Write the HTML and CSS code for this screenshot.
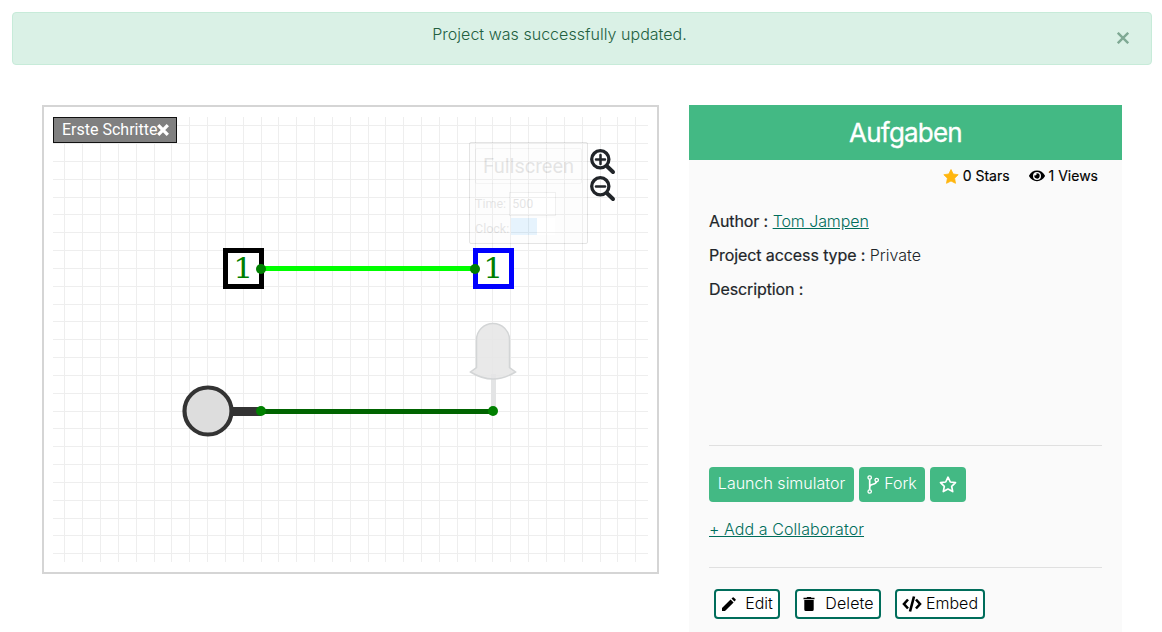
FILE: index.html
```
<!DOCTYPE html>
<html lang="en">
<head>
<meta charset="utf-8">
<title>Aufgaben</title>
<link rel="stylesheet" href="styles.css">
</head>
<body>
<div class="alert">
  <p class="alert-text">Project was successfully updated.</p>
  <button class="alert-close" aria-label="Close"><svg width="12" height="12" viewBox="0 0 12 12"><path d="M.8 .8L11.200 11.200M11.200 .8L.8 11.200" stroke="#7fa994" stroke-width="2.400"/></svg></button>
</div>
<main class="project">
  <section class="preview">
    <svg class="circuit" viewBox="53 117 595 445" width="595" height="445">
      <path class="grid" d="M64.5 117v445M82.5 117v445M100.5 117v445M118.5 117v445M136.5 117v445M154.5 117v445M171.5 117v445M189.5 117v445M207.5 117v445M225.5 117v445M243.5 117v445M261.5 117v445M278.5 117v445M296.5 117v445M314.5 117v445M332.5 117v445M350.5 117v445M368.5 117v445M385.5 117v445M403.5 117v445M421.5 117v445M439.5 117v445M457.5 117v445M475.5 117v445M492.5 117v445M510.5 117v445M528.5 117v445M546.5 117v445M564.5 117v445M582.5 117v445M600.5 117v445M617.5 117v445M635.5 117v445
      M53 125.5h595M53 143.5h595M53 161.5h595M53 179.5h595M53 197.5h595M53 214.5h595M53 232.5h595M53 250.5h595M53 268.5h595M53 286.5h595M53 304.5h595M53 321.5h595M53 339.5h595M53 357.5h595M53 375.5h595M53 393.5h595M53 411.5h595M53 428.5h595M53 446.5h595M53 464.5h595M53 482.5h595M53 500.5h595M53 518.5h595M53 535.5h595M53 553.5h595"/>
      <path class="wire-high" d="M261 268.5H475"/>
      <rect class="pin pin-in" x="225.5" y="250.5" width="36" height="36"/>
      <rect class="pin pin-out" x="475.5" y="250.5" width="36" height="36"/>
      <text class="bit" x="243.3" y="278" textLength="20" lengthAdjust="spacingAndGlyphs">1</text>
      <text class="bit" x="493.3" y="278" textLength="20" lengthAdjust="spacingAndGlyphs">1</text>
      <path class="button-stem" d="M232 411.5H261"/>
      <path class="wire-low" d="M261 411.5H493"/>
      <circle class="button-cap" cx="208" cy="411" r="23.5"/>
      <path class="led-stem" d="M493.5 374V411"/>
      <path class="led-bulb" d="M476.5 367.500V340A16.500 16.500 0 0 1 509.500 340V367.500L515.500 372Q493 386 470.500 372Z"/>
      <g class="node"><circle cx="261" cy="269" r="5"/><circle cx="475" cy="269" r="5"/><circle cx="261" cy="411" r="5"/><circle cx="493" cy="411" r="5"/></g>
    </svg>
    <div class="tab"><span>Erste Schritte</span><svg width="12" height="12" viewBox="0 0 12 12"><path d="M1.200 1.200L10.800 10.800M10.800 1.200L1.200 10.800" stroke="#fff" stroke-width="3.300"/></svg></div>
    <div class="controls">
      <div class="fullscreen">Fullscreen</div>
      <div class="control-row"><span>Time:</span><span class="time-box">500</span></div>
      <div class="control-row clock-row"><span>Clock:</span><span class="clock-box"></span></div>
    </div>
    <div class="zooms">
      <svg width="27" height="27" viewBox="0 0 27 27"><circle cx="11.300" cy="10.300" r="8.600"/><path d="M18 17.300L24 23" stroke-width="4"/><path d="M7 10.500h9M11.500 6v9" stroke-width="2.500"/></svg>
      <svg width="27" height="27" viewBox="0 0 27 27"><circle cx="11.300" cy="10.300" r="8.600"/><path d="M18 17.300L24 23" stroke-width="4"/><path d="M7 10.500h9" stroke-width="2.500"/></svg>
    </div>
  </section>
  <aside class="details">
    <h1 class="title">Aufgaben</h1>
    <div class="stats">
      <span class="stat"><svg width="16" height="15" viewBox="0 0 16 15"><path d="M8 .5L10.200 5L15.200 5.700L11.600 9.200L12.500 14.300L8 12L3.500 14.300L4.400 9.200L.8 5.700L5.800 5Z" fill="#ffb60f" stroke="#ffb60f" stroke-width=".8" stroke-linejoin="round"/></svg>0 Stars</span>
      <span class="stat views"><svg width="16" height="12" viewBox="0 0 576 432"><path d="M572.500 199.400C518.300 93.600 410.900 22 288 22S57.700 93.600 3.500 199.400a32 32 0 0 0 0 29.200C57.700 334.400 165.100 406 288 406s230.300-71.600 284.500-177.400a32 32 0 0 0 0-29.200zM288 358a144 144 0 1 1 144-144 144 144 0 0 1-144 144zm0-240a95 95 0 0 0-25.300 3.800 48 48 0 0 1-66.900 66.900A95.800 95.800 0 1 0 288 118z"/></svg>1 Views</span>
    </div>
    <div class="info">
      <p><b>Author :</b> <a href="#">Tom Jampen</a></p>
      <p><b>Project access type :</b> Private</p>
      <p><b>Description :</b></p>
    </div>
    <div class="actions">
      <button class="primary">Launch simulator</button>
      <button class="primary fork"><svg width="12" height="19" viewBox="0 0 12 19" fill="none" stroke="#fff" stroke-width="1.300"><circle cx="2.700" cy="2.500" r="1.700"/><circle cx="2.700" cy="16.500" r="1.700"/><circle cx="9.700" cy="5" r="1.700"/><path d="M2.700 4.200V14.800M9.300 6.700C9 10.500 3 8 2.700 12" stroke-width="1.700"/></svg>Fork</button>
      <button class="primary star"><svg width="18" height="17" viewBox="0 0 18 17"><path d="M9 1.200L11.300 6L16.500 6.700L12.700 10.300L13.700 15.600L9 13.100L4.300 15.600L5.300 10.300L1.500 6.700L6.700 6Z" fill="none" stroke="#fff" stroke-width="1.700" stroke-linejoin="round"/></svg></button>
    </div>
    <div class="collab"><a href="#">+ Add a Collaborator</a></div>
    <div class="manage">
      <button class="outline edit"><svg width="14" height="14" viewBox="0 0 14 14"><path d="M0 14V11L8.600 2.400L11.600 5.400L3 14ZM9.500 1.600L10.700.4Q11.200 0 11.700.4L13.600 2.300Q14 2.800 13.600 3.300L12.400 4.500Z"/></svg>Edit</button>
      <button class="outline delete"><svg width="12" height="14" viewBox="0 0 12 14"><path d="M.5 .8H3.500L4.200 0H7.800L8.500 .8H11.500V2.200H.5ZM1.300 3.100H10.700V12.500Q10.700 14 9.200 14H2.800Q1.300 14 1.300 12.500Z"/></svg>Delete</button>
      <button class="outline embed"><svg width="20" height="16" viewBox="0 0 20 16" fill="none" stroke="#000" stroke-width="2.600"><path d="M6 3.500L2 8L6 12.500M14 3.500L18 8L14 12.500M12 .5L8 15.500"/></svg>Embed</button>
    </div>
  </aside>
</main>
</body>
</html>
```
FILE: styles.css
```
* { box-sizing: border-box; }
body { margin: 0; padding: 12px 10px 0 12px; height: 632px; overflow: hidden; background: #fff; color: #212529; font: 300 16px/24px Inter, sans-serif; }
button { font: inherit; margin: 0; padding: 0; cursor: pointer; }
svg { display: block; flex: none; }
p, h1 { margin: 0; }
a { color: #006d5b; text-decoration: underline; }

.alert { display: flex; align-items: center; height: 53px; padding: 0 22px 0 20px; border: 1px solid #c7ebd9; border-radius: 4px; background: #daf1e6; color: #22603f; }
.alert-text { flex: 1; padding: 0 31px 9px 0; letter-spacing: .03px; text-align: center; }
.alert-close { padding-bottom: 2px; border: 0; background: none; }

.project { display: flex; gap: 30px; margin-top: 40px; padding-left: 30px; }
.preview { position: relative; width: 617px; height: 469px; padding: 10px 9px; border: 2px solid #d5d5d5; font-family: Roboto, sans-serif; font-weight: 400; }
.grid { stroke: #eee; fill: none; shape-rendering: crispEdges; }
.wire-high { stroke: #0f0; stroke-width: 5; }
.wire-low { stroke: #006400; stroke-width: 5; }
.pin { fill: #fff; stroke-width: 5; }
.pin-in { stroke: #000; }
.pin-out { stroke: #00f; }
.bit { fill: green; font: 400 27px "DejaVu Serif", serif; text-anchor: middle; }
.node { fill: green; }
.button-stem { stroke: #333; stroke-width: 9; }
.button-cap { fill: #ddd; stroke: #333; stroke-width: 4.200; }
.led-stem { stroke: #e3e4e5; stroke-width: 5; }
.led-bulb { fill: #e5e5e5; fill-opacity: .86; stroke: #d3d5d6; stroke-width: 1.500; }

.tab { position: absolute; left: 9px; top: 10px; display: flex; align-items: center; width: 124px; height: 26px; padding-left: 8px; border: 1px solid #111; background: #808080; color: #fff; }
.controls { position: absolute; left: 425px; top: 35px; width: 119px; height: 102px; padding: 5px 5px; border: 1px solid #000; border-radius: 2px; background: #eee; color: #000; opacity: .1; font-size: 12.500px; }
.fullscreen { height: 36px; border: 1px solid #999; border-radius: 2px; font-size: 20px; line-height: 34px; text-align: center; }
.control-row { display: flex; align-items: center; gap: 3px; height: 24px; margin-top: 8px; }
.time-box { width: 47px; height: 24px; padding-left: 2px; border: 1px solid #777; background: #fff; line-height: 22px; }
.clock-row { gap: 2px; margin-top: 1px; }
.clock-box { width: 44px; height: 17px; margin-bottom: 5px; background: linear-gradient(90deg, #1296f3 60%, #fff 60%); }
.zooms { position: absolute; left: 545px; top: 42px; }
.zooms svg { fill: none; stroke: #212529; stroke-width: 3.300; stroke-linecap: round; }

.details { width: 433px; height: 527px; background: #fafafa; }
.title { height: 55px; background: #43b984; color: #fff; font-size: 26px; font-weight: 400; letter-spacing: -.8px; -webkit-text-stroke: .3px; line-height: 55px; text-align: center; }
.stats { display: flex; justify-content: flex-end; gap: 18px; padding: 4px 24px 0 0; color: #000; font-size: 14px; font-weight: 400; -webkit-text-stroke: .15px; }
.stat { display: flex; align-items: center; gap: 4px; }
.stat:first-child { margin-right: 1px; }
.info { display: flex; flex-direction: column; gap: 10px; height: 237px; margin: 21px 20px 0; border-bottom: 1px solid #e0e0e0; }
.info b { font-weight: 400; letter-spacing: -.1px; -webkit-text-stroke: .2px; }
.info a { letter-spacing: -.08px; }
.actions { display: flex; gap: 5px; margin: 21px 20px 0; }
.primary { display: flex; align-items: center; justify-content: center; width: 145px; height: 35px; padding-bottom: 3px; border: 0; border-radius: 4px; background: #43b984; color: #fff; }
.fork { gap: 5px; width: 66px; }
.fork svg { margin-top: 3px; }
.star { width: 36px; padding-bottom: 0; }
.collab { height: 66px; margin: 0 20px; padding-top: 15px; border-bottom: 1px solid #e0e0e0; letter-spacing: .07px; }
.manage { display: flex; gap: 15px; margin: 21px 25px 0; }
.outline { display: flex; align-items: center; justify-content: center; gap: 9px; width: 66px; height: 30px; padding: 0 0 2px 1px; border: 2px solid #006d5b; border-radius: 4px; background: #fff; color: #000; }
.outline svg { margin-top: 1px; }
.delete { width: 86px; gap: 10px; letter-spacing: .1px; }
.embed { width: 90px; gap: 4px; margin-left: -1px; padding-left: 0; }
```
